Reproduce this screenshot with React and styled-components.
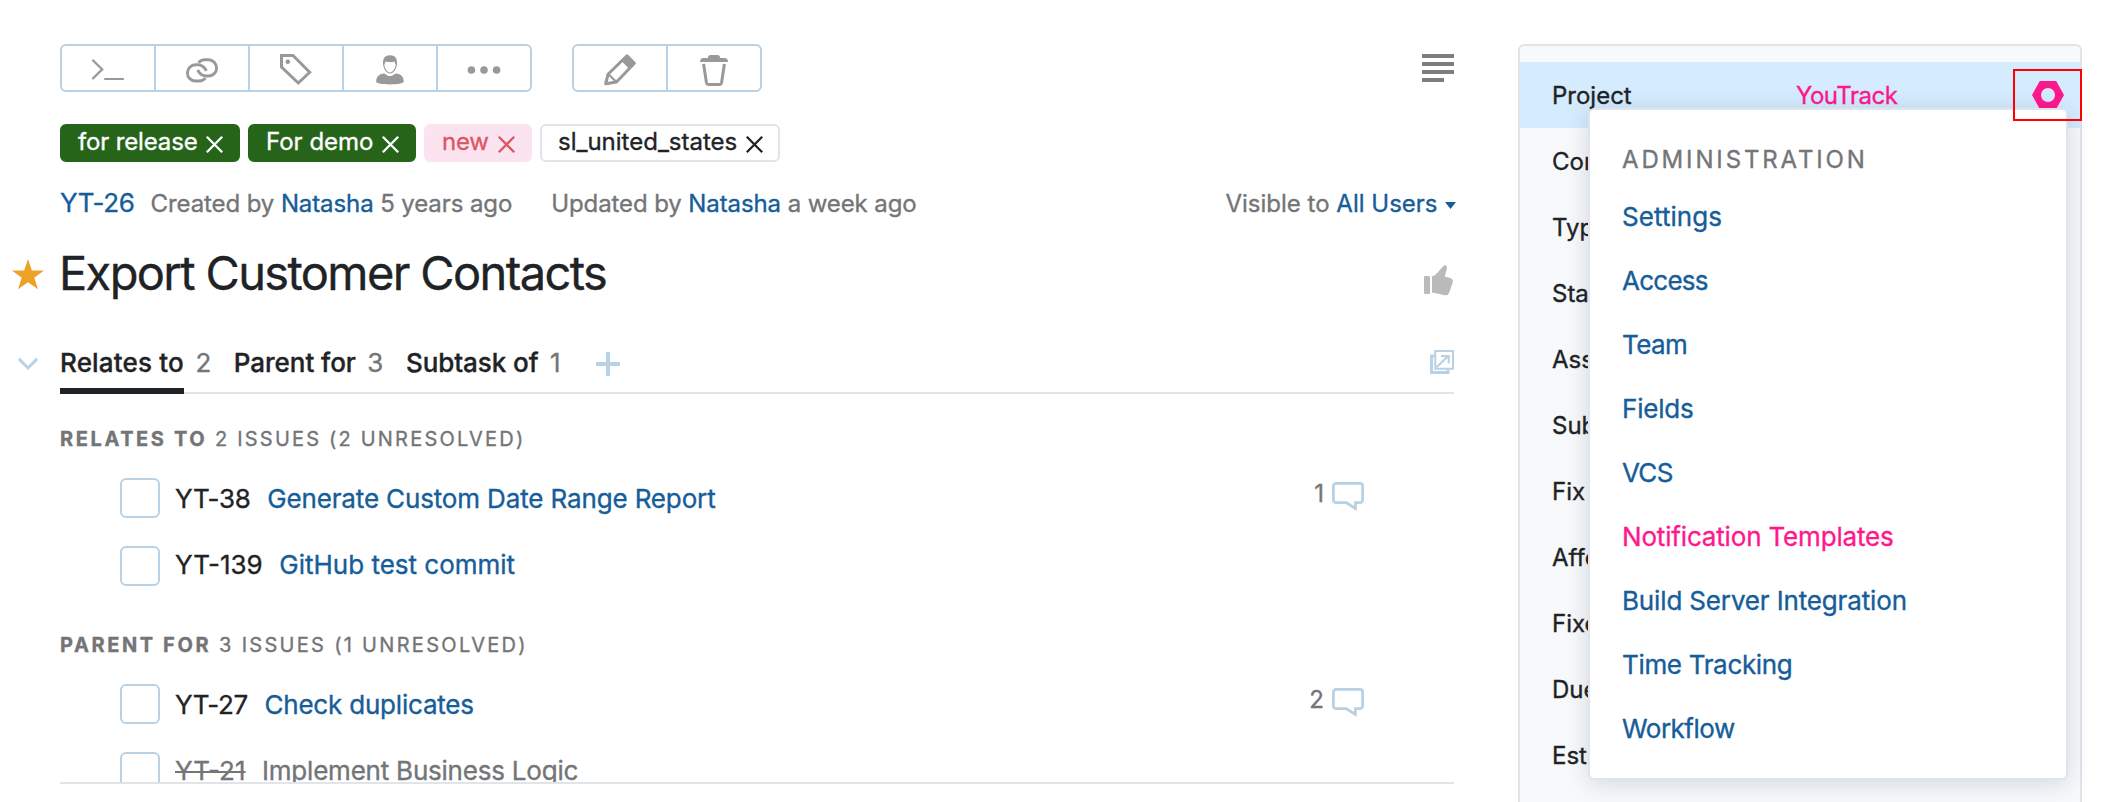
import React from "react";
import styled, { createGlobalStyle } from "styled-components";

const color = {
  text: "#1f2326",
  secondary: "#737577",
  link: "#165d99",
  accent: "#ff188c",
  icon: "#999999",
  control: "#b8d1e5",
  line: "#dfe5eb",
  sidebar: "#f7f9fb",
  selected: "#d5ebfe",
};

const GlobalStyle = createGlobalStyle`
  *, *::before, *::after { box-sizing: border-box; }
  body {
    margin: 0;
    background: #fff;
    color: ${color.text};
    font-family: Inter, "Liberation Sans", sans-serif;
    font-size: 24px;
    -webkit-text-stroke: 0.35px currentColor;
  }
  svg { display: block; flex: none; }
`;

const Page = styled.div`
  display: flex;
  width: 2112px;
  height: 802px;
  overflow: hidden;
`;

const Main = styled.main`
  width: 1454px;
  flex: none;
  padding-top: 44px;
`;

const Gutter = styled.div`
  width: 60px;
  flex: none;
  padding: ${(p) => p.$pad};
`;

const Toolbar = styled.div`
  display: flex;
  gap: 40px;
  height: 48px;
  padding-left: 60px;
`;

const ButtonGroup = styled.div`
  display: flex;
`;

const ToolButton = styled.button`
  width: 96px;
  height: 48px;
  margin: 0 0 0 -2px;
  padding: 0;
  display: flex;
  align-items: center;
  justify-content: center;
  background: #fff;
  border: 2px solid ${color.control};
  color: ${color.icon};
  &:first-child { margin-left: 0; border-radius: 6px 0 0 6px; }
  &:last-child { border-radius: 0 6px 6px 0; }
`;

const ViewToggle = styled.div`
  display: flex;
  flex-direction: column;
  gap: 4px;
  width: 32px;
  margin: 10px 0 0 auto;
`;

const ViewLine = styled.span`
  height: 4px;
  width: ${(p) => (p.$short ? 22 : 32)}px;
  background: #7d7e80;
`;

const Tags = styled.div`
  display: flex;
  gap: 8px;
  height: 38px;
  margin: 32px 0 0 60px;
`;

const tones = {
  green: ["#26641a", "#26641a", "#fff"],
  pink: ["#fbe4f0", "#fbe4f0", "#dc5766"],
  plain: ["#fff", color.line, color.text],
};

const Tag = styled.span`
  display: flex;
  justify-content: space-between;
  width: ${(p) => p.$width}px;
  padding: 0 15.5px 0 16px;
  border: 2px solid ${(p) => tones[p.$tone][1]};
  border-radius: 6px;
  background: ${(p) => tones[p.$tone][0]};
  color: ${(p) => tones[p.$tone][2]};
  line-height: 32px;
  letter-spacing: ${(p) => p.$track || 0}px;
  svg { margin-top: 10px; }
`;

const Meta = styled.div`
  display: flex;
  align-items: baseline;
  height: 40px;
  margin: 21px 0 0 60px;
  line-height: 40px;
  color: ${color.secondary};
  white-space: nowrap;
`;

const Link = styled.span`
  color: ${color.link};
`;

const IssueKey = styled(Link)`
  font-size: 26px;
  letter-spacing: -0.3px;
  margin-right: 16px;
`;

const MetaText = styled.span`
  letter-spacing: -0.1px;
  & + & { margin-left: 39px; }
`;

const Visibility = styled.span`
  display: flex;
  align-items: baseline;
  gap: 7px;
  margin: 0 -1.5px 0 auto;
  svg { position: relative; top: -3px; }
`;

const TitleRow = styled.div`
  display: flex;
  height: 60px;
  margin-top: 20px;
`;

const Title = styled.h1`
  margin: 0 auto 0 -1px;
  font-size: 47px;
  font-weight: 400;
  line-height: 60px;
  letter-spacing: -1.63px;
`;

const Vote = styled.div`
  padding: 22px 1px 0 0;
`;

const LinksRow = styled.div`
  display: flex;
  margin-top: 40px;
`;

const TabBar = styled.div`
  display: flex;
  align-items: flex-start;
  flex: 1;
  height: 51px;
  border-bottom: 2px solid ${color.line};
`;

const Tab = styled.div`
  display: flex;
  gap: 11.5px;
  margin-right: 22.5px;
  font-size: 26px;
  line-height: 39px;
`;

const TabLabel = styled.span`
  height: 51px;
  font-weight: 500;
  letter-spacing: ${(p) => p.$track}px;
  border-bottom: 6px solid ${(p) => (p.$active ? color.text : "transparent")};
`;

const TabCount = styled.span`
  color: ${color.secondary};
`;

const AddLink = styled.div`
  margin: 9px auto 0 13px;
`;

const Detach = styled.div`
  margin-top: 7px;
`;

const Links = styled.div`
  height: 390px;
  margin-left: 60px;
  overflow: hidden;
  border-bottom: 2px solid ${color.line};
`;

const GroupTitle = styled.div`
  padding-top: ${(p) => p.$top}px;
  margin-bottom: 7px;
  font-size: 20px;
  line-height: 40px;
  letter-spacing: ${(p) => p.$track}px;
  color: ${color.secondary};
  b { font-weight: 700; letter-spacing: 2.6px; }
`;

const IssueRow = styled.div`
  display: flex;
  height: 66px;
  padding: 0 90px 0 60px;
  font-size: 26px;
  line-height: 65px;
  white-space: nowrap;
`;

const Checkbox = styled.span`
  flex: none;
  width: 40px;
  height: 40px;
  margin: ${(p) => p.$top}px 15px 0 0;
  border: 2px solid ${color.control};
  border-radius: 6px;
  background: #fff;
`;

const IssueId = styled.span`
  letter-spacing: ${(p) => p.$track}px;
  margin-right: 16.5px;
  color: ${(p) => (p.$resolved ? color.secondary : color.text)};
  text-decoration: ${(p) => (p.$resolved ? "line-through" : "none")};
  text-decoration-thickness: 2px;
`;

const IssueTitle = styled.span`
  letter-spacing: ${(p) => p.$track}px;
  color: ${(p) => (p.$resolved ? color.secondary : color.link)};
`;

const Comments = styled.span`
  display: flex;
  gap: 8px;
  margin-left: auto;
  font-size: 24px;
  line-height: 56px;
  color: ${color.secondary};
  svg { margin-top: 16px; }
`;

const Sidebar = styled.aside`
  position: relative;
  flex: none;
  width: 564px;
  height: 800px;
  margin: 44px 0 0 64px;
  padding-top: 16px;
  background: ${color.sidebar};
  border: 2px solid ${color.line};
  border-radius: 6px;
`;

const Field = styled.div`
  display: grid;
  grid-template-columns: 244px 1fr 32px;
  align-items: center;
  height: 66px;
  padding: 0 16px 0 32px;
  line-height: 30px;
  background: ${(p) => (p.$selected ? color.selected : "transparent")};
`;

const FieldName = styled.span`
  padding-top: 2px;
`;

const FieldValue = styled.span`
  padding-top: 2px;
  color: ${color.accent};
  letter-spacing: -0.5px;
`;

const Highlight = styled.div`
  position: absolute;
  top: 23px;
  right: -2px;
  z-index: 2;
  width: 69px;
  height: 52px;
  border: 2px solid #ff0000;
`;

const Menu = styled.div`
  position: absolute;
  top: 62px;
  left: 68px;
  z-index: 1;
  width: 480px;
  height: 672px;
  padding: 30px 32px 0;
  background: #fff;
  border: 2px solid ${color.line};
  border-radius: 6px;
  box-shadow: 0 4px 24px rgba(0, 42, 76, 0.15);
`;

const MenuTitle = styled.div`
  margin: 0 0 5px;
  line-height: 40px;
  letter-spacing: 2.85px;
  color: ${color.secondary};
`;

const MenuItem = styled.div`
  font-size: 26px;
  line-height: 64px;
  letter-spacing: ${(p) => p.$track}px;
  color: ${(p) => (p.$hovered ? color.accent : color.link)};
`;

const Icon = ({ children, w = 32, h = 32, ...rest }) => (
  <svg width={w} height={h} viewBox={`0 0 ${w} ${h}`} fill="none" stroke="currentColor" overflow="visible" {...rest}>
    {children}
  </svg>
);

const CommandIcon = () => (
  <Icon strokeWidth="2.2">
    <path d="M1 8.4l9.2 9L1 26.4" strokeLinecap="round" />
    <path d="M13 27h18" strokeLinecap="round" />
  </Icon>
);

const LinkIcon = () => {
  const loop = "M12.6 10.8C14 8.8 16.3 7.8 19 7.8h3.5a8 8 0 0 1 0 16.2H20.5C16 24 13.6 21.8 11.6 18";
  return (
    <Icon strokeWidth="2.9">
      <path d={loop} />
      <path d={loop} transform="rotate(180 16 18.4)" />
    </Icon>
  );
};

const TagIcon = () => (
  <Icon strokeWidth="3">
    <path d="M1.5 3.5H13l16.7 16.8L18.3 31 1.5 15.2z" />
    <circle cx="7.8" cy="9.8" r="2.3" fill="currentColor" stroke="none" />
  </Icon>
);

const UserIcon = () => (
  <Icon stroke="none" fill="currentColor">
    <path d="M9 12C8.6 6.500 11 3.200 16 3.200S23.400 6.500 23 12C22.500 17 19.500 21.500 16 21.500S9.500 17 9 12z" />
    <path d="M10.300 12.800L11.600 9.600Q16.500 11 20.400 9.600L21.700 12.800C21.200 16.800 18.800 20.400 16 20.400S10.800 16.800 10.300 12.800z" fill="#fff" />
    <path d="M10 21.500C12 22 12.800 24 16 24S20 22 22 21.500C27 22 29.800 25 29.800 29.500C29.800 31.500 23 32.400 16 32.400S2.200 31.500 2.200 29.500C2.200 25 5 22 10 21.500z" />
  </Icon>
);

const MoreIcon = () => (
  <Icon stroke="none" fill="currentColor">
    <circle cx="3.4" cy="18" r="3.8" />
    <circle cx="16" cy="18" r="3.8" />
    <circle cx="28.6" cy="18" r="3.8" />
  </Icon>
);

const PencilIcon = () => (
  <Icon strokeWidth="3" strokeLinejoin="round">
    <path d="M23 3.800L4 22.300 1.700 31.800 12.500 30 30.400 11.300z" />
    <path d="M18 8.500L23 3.800l7.400 7.500-4.700 5z" fill="currentColor" strokeWidth="1.500" />
    <path d="M4.500 22.300l7.700 7.400" strokeWidth="2.200" />
    <path d="M1 29l4 3.500" strokeWidth="2.200" />
  </Icon>
);

const TrashIcon = () => (
  <Icon strokeWidth="3">
    <path d="M10 6V5.500Q10 3 12.500 3h7Q22 3 22 5.500V6h4.500Q30 6 30 10H2Q2 6 5.500 6z" fill="currentColor" stroke="none" />
    <path d="M5.600 12l2.800 18.500Q8.800 32.500 10.800 32.500h10.400Q23.200 32.500 23.600 30.500L26.400 12" />
  </Icon>
);

const CloseIcon = () => (
  <Icon w={17} h={17} strokeWidth="2.300">
    <path d="M.8.8l15.400 15.400M16.200.8L.8 16.200" />
  </Icon>
);

const StarIcon = () => (
  <Icon w={32} h={31} stroke="none" fill="#eca127">
    <path d="M16 0l3.900 11.500H32l-9.700 7.200L26 30.300l-10-7-10 7 3.700-11.600L0 11.500h12.100z" />
  </Icon>
);

const ThumbIcon = () => (
  <Icon w={29} h={31} stroke="none" fill="#b9babc">
    <rect y="11" width="6" height="18" rx="1.200" />
    <path d="M8 11.200Q10.500 10.800 12 9.200L19 1.400Q20.500-.4 22.200.7 23.300 1.600 22.900 3.200L20.800 11.400 26.300 13Q29.400 14.300 28.800 17.500L25.200 27.600Q24 30.700 21 30.200L8 27.400z" />
  </Icon>
);

const DetachIcon = () => (
  <Icon w={24} h={24} stroke={color.control}>
    <path d="M4.500 6H1.500v16.500H18V19.500" strokeWidth="3" />
    <path d="M5.200 1H23v17.800H5.200z" strokeWidth="2" />
    <path d="M6.500 17.300L18.200 6M11 6h7.700v7.200" strokeWidth="2.200" />
  </Icon>
);

const BubbleIcon = () => (
  <Icon w={32} h={29} stroke={color.control} strokeWidth="2.800">
    <path d="M4 1.400h24A2.600 2.600 0 0 1 30.600 4v14A2.600 2.600 0 0 1 28 20.700h-4.600V26.500l-9-5.800H4A2.600 2.600 0 0 1 1.400 18V4A2.600 2.600 0 0 1 4 1.400z" />
  </Icon>
);

const NutIcon = () => (
  <Icon w={32} h={28} stroke="none" fill={color.accent}>
    <path fillRule="evenodd" d="M7.800 0h16.400L32 14l-7.800 14H7.800L0 14zM16 7a7 7 0 1 0 0 14 7 7 0 0 0 0-14z" />
  </Icon>
);

const groups = [
  {
    name: "RELATES TO",
    info: "2 ISSUES (2 UNRESOLVED)",
    top: 25,
    track: 2.2,
    issues: [
      { id: "YT-38", idTrack: -0.24, title: "Generate Custom Date Range Report", track: -0.14, comments: 1 },
      { id: "YT-139", idTrack: 0, title: "GitHub test commit", track: 0 },
    ],
  },
  {
    name: "PARENT FOR",
    info: "3 ISSUES (1 UNRESOLVED)",
    top: 27,
    track: 2.3,
    issues: [
      { id: "YT-27", idTrack: -0.35, title: "Check duplicates", track: -0.2, comments: 2 },
      { id: "YT-21", idTrack: 0, title: "Implement Business Logic", track: -0.22, resolved: true },
    ],
  },
];

const fields = [
  "Component", "Type", "State", "Assignee", "Subsystem",
  "Fix versions", "Affected versions", "Fixed in build", "Due Date", "Estimation",
];

const menu = [
  ["Settings", 0.06],
  ["Access", -0.75],
  ["Team", -0.59],
  ["Fields", -0.2],
  ["VCS", -0.7],
  ["Notification Templates", -0.17],
  ["Build Server Integration", -0.15],
  ["Time Tracking", -0.33],
  ["Workflow", -0.5],
];

export default function App() {
  return (
    <Page>
      <GlobalStyle />
      <Main>
        <Toolbar>
          <ButtonGroup>
            {[CommandIcon, LinkIcon, TagIcon, UserIcon, MoreIcon].map((Glyph, i) => (
              <ToolButton key={i}><Glyph /></ToolButton>
            ))}
          </ButtonGroup>
          <ButtonGroup>
            <ToolButton><PencilIcon /></ToolButton>
            <ToolButton><TrashIcon /></ToolButton>
          </ButtonGroup>
          <ViewToggle>
            <ViewLine /><ViewLine /><ViewLine /><ViewLine $short />
          </ViewToggle>
        </Toolbar>

        <Tags>
          <Tag $tone="green" $width={180} $track={-0.15}>for release<CloseIcon /></Tag>
          <Tag $tone="green" $width={168}>For demo<CloseIcon /></Tag>
          <Tag $tone="pink" $width={108} $track={-0.3}>new<CloseIcon /></Tag>
          <Tag $tone="plain" $width={240}>sl_united_states<CloseIcon /></Tag>
        </Tags>

        <Meta>
          <IssueKey>YT-26</IssueKey>
          <MetaText>Created by <Link>Natasha</Link> 5 years ago</MetaText>
          <MetaText>Updated by <Link>Natasha</Link> a week ago</MetaText>
          <Visibility>
            <span>Visible to <Link>All Users</Link></span>
            <Icon w={11} h={7} stroke="none" fill={color.link}><path d="M0 0h11L5.500 7z" /></Icon>
          </Visibility>
        </Meta>

        <TitleRow>
          <Gutter $pad="16px 0 0 12px"><StarIcon /></Gutter>
          <Title>Export Customer Contacts</Title>
          <Vote><ThumbIcon /></Vote>
        </TitleRow>

        <LinksRow>
          <Gutter $pad="15px 0 0 18px">
            <Icon w={20} h={12} stroke={color.control} strokeWidth="3"><path d="M.8.8L10 10l9.200-9.200" /></Icon>
          </Gutter>
          <TabBar>
            <Tab><TabLabel $active $track={0.18}>Relates to</TabLabel><TabCount>2</TabCount></Tab>
            <Tab><TabLabel $track={-0.05}>Parent for</TabLabel><TabCount>3</TabCount></Tab>
            <Tab><TabLabel $track={-0.08}>Subtask of</TabLabel><TabCount>1</TabCount></Tab>
            <AddLink>
              <Icon w={24} h={24} stroke={color.control} strokeWidth="4"><path d="M12 0v24M0 12h24" /></Icon>
            </AddLink>
            <Detach><DetachIcon /></Detach>
          </TabBar>
        </LinksRow>

        <Links>
          {groups.map((g) => (
            <React.Fragment key={g.name}>
              <GroupTitle $top={g.top} $track={g.track}><b>{g.name}</b> {g.info}</GroupTitle>
              {g.issues.map((it, i) => (
                <IssueRow key={it.id}>
                  <Checkbox $top={12 + i * 2} />
                  <IssueId $track={it.idTrack} $resolved={it.resolved}>{it.id}</IssueId>
                  <IssueTitle $track={it.track} $resolved={it.resolved}>{it.title}</IssueTitle>
                  {it.comments && <Comments>{it.comments}<BubbleIcon /></Comments>}
                </IssueRow>
              ))}
            </React.Fragment>
          ))}
        </Links>
      </Main>

      <Sidebar>
        <Field $selected>
          <FieldName>Project</FieldName>
          <FieldValue>YouTrack</FieldValue>
          <NutIcon />
        </Field>
        {fields.map((name) => <Field key={name}><FieldName>{name}</FieldName></Field>)}
        <Menu>
          <MenuTitle>ADMINISTRATION</MenuTitle>
          {menu.map(([name, track]) => (
            <MenuItem key={name} $track={track} $hovered={name === "Notification Templates"}>{name}</MenuItem>
          ))}
        </Menu>
        <Highlight />
      </Sidebar>
    </Page>
  );
}
